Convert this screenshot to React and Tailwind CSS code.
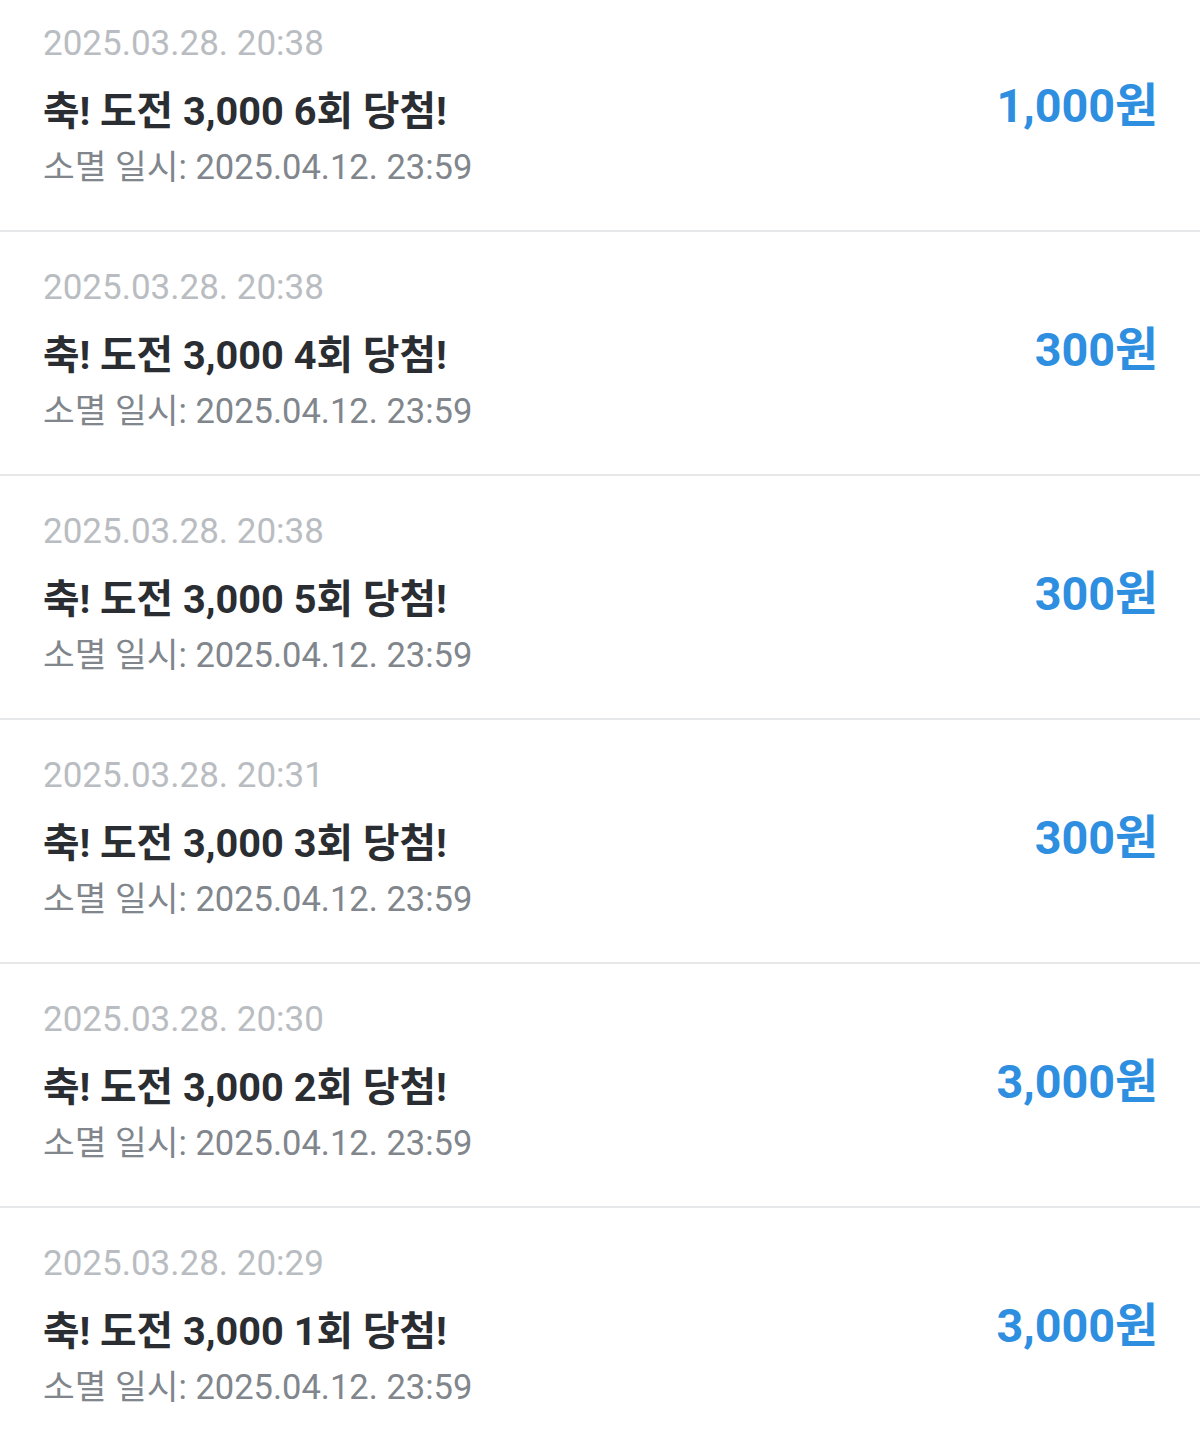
import React from 'react';

const items = [
  { date: '2025.03.28. 20:38', round: 6, amount: '1,000원' },
  { date: '2025.03.28. 20:38', round: 4, amount: '300원' },
  { date: '2025.03.28. 20:38', round: 5, amount: '300원' },
  { date: '2025.03.28. 20:31', round: 3, amount: '300원' },
  { date: '2025.03.28. 20:30', round: 2, amount: '3,000원' },
  { date: '2025.03.28. 20:29', round: 1, amount: '3,000원' },
];

export default function App() {
  return (
    <div
      className="min-h-screen bg-white overflow-hidden"
      style={{ fontFamily: 'Roboto, "Noto Sans CJK KR", sans-serif' }}
    >
      {/* list is scrolled a little, first row is cut at the top */}
      <div className="-mt-[12px]">
        {items.map((item, i) => (
          <div
            key={i}
            className="h-[244px] flex justify-between items-start pl-[43px] pr-[42px] pt-[34px] border-b-2 border-[#e6e7e9]"
          >
            <div className="flex flex-col">
              <span className="text-[35px] leading-[44px] text-[#b9bdc1]">{item.date}</span>
              <span className="mt-[23px] text-[39.7px] leading-[46px] font-bold text-[#2a2d31]">
                축! 도전 3,000 {item.round}회 당첨!
              </span>
              <span className="mt-[10px] text-[34.5px] leading-[44px] text-[#80868c]">
                소멸 일시: 2025.04.12. 23:59
              </span>
            </div>
            <span className="mt-[56px] text-[46.7px] leading-[56px] font-bold text-[#2e8ee0]">
              {item.amount}
            </span>
          </div>
        ))}
      </div>
    </div>
  );
}
